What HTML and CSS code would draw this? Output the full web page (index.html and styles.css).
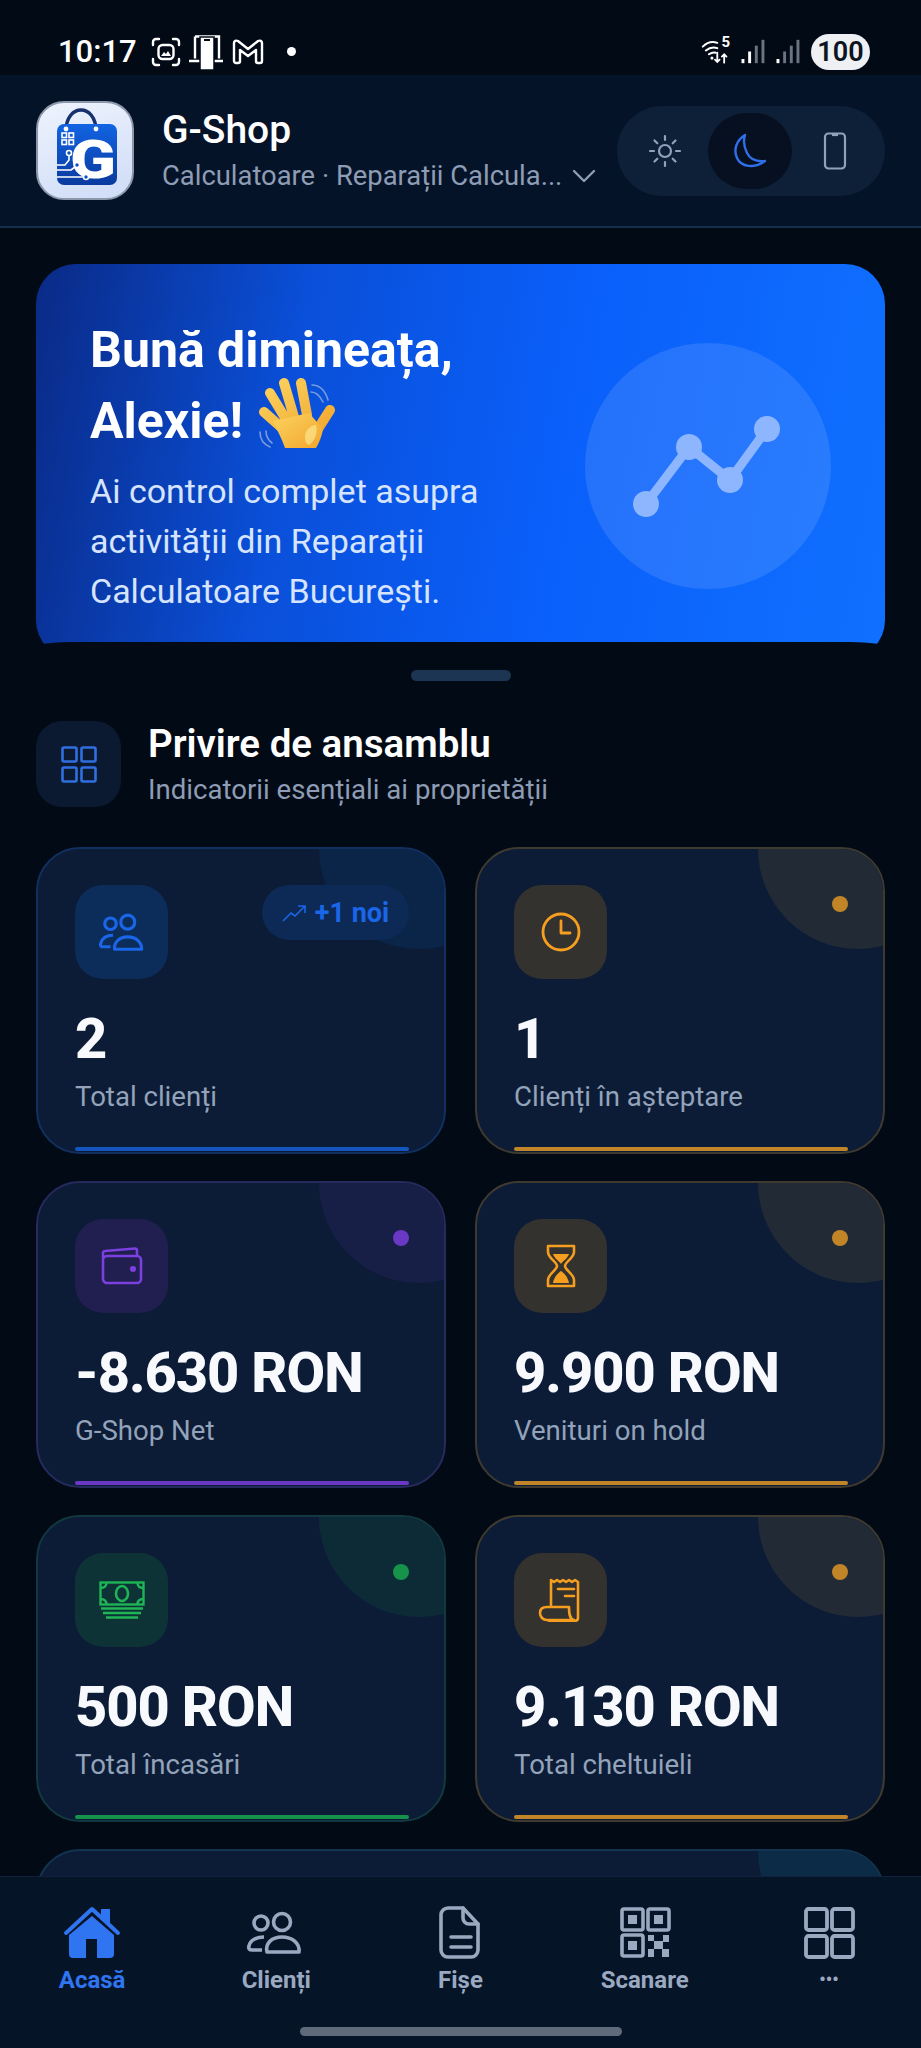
FILE: index.html
```html
<!DOCTYPE html>
<html lang="ro">

<head>
    <meta charset="UTF-8">
    <meta name="viewport" content="width=device-width, initial-scale=1.0">
    <title>G-Shop</title>
    <link rel="stylesheet" href="styles.css">
</head>

<body>
    <div class="page">

        <div class="status">
            <div class="status-left">
                <span class="time">10:17</span>
                <svg class="st-icon" width="32" height="32" viewBox="0 0 32 32" fill="none" stroke="#fff" stroke-width="2.4" stroke-linecap="round">
                    <path d="M3 9V6a3 3 0 0 1 3-3h3M23 3h3a3 3 0 0 1 3 3v3M29 23v3a3 3 0 0 1-3 3h-3M9 29H6a3 3 0 0 1-3-3v-3" />
                    <rect x="8.5" y="9" width="15" height="14" rx="4" />
                    <path d="M11 20l3-4 2 2 2-3 3 5z" fill="#fff" stroke="none" />
                </svg>
                <svg class="st-icon" width="36" height="36" viewBox="0 0 36 36" fill="none">
                    <path d="M6 2.5h24v22" stroke="#fff" stroke-width="2.4" />
                    <path d="M6 2.5v22" stroke="#fff" stroke-width="2.4" />
                    <path d="M0 27h34" stroke="#fff" stroke-width="2.4" />
                    <rect x="11" y="3" width="14" height="33" fill="#fff" stroke="#020a16" stroke-width="1.5" />
                    <rect x="15" y="5" width="6" height="2" fill="#020a16" />
                </svg>
                <svg class="st-icon" width="32" height="28" viewBox="0 0 32 28" fill="none" stroke="#fff" stroke-width="2.4" stroke-linejoin="round">
                    <path d="M2 5c0-2 2-3 4-2l10 8 10-8c2-1 4 0 4 2v18a2 2 0 0 1-2 2h-2a2 2 0 0 1-2-2V12l-8 6-8-6v11a2 2 0 0 1-2 2H4a2 2 0 0 1-2-2z" />
                </svg>
                <span class="st-dot"></span>
            </div>
            <div class="status-right">
                <div class="wifi">
                    <svg width="34" height="26" viewBox="0 0 36 34" fill="none" stroke="#fff" stroke-width="2.6" stroke-linecap="round">
                        <path d="M2 10C8 4 15 3 21 5M6 15c5-4 10-5 15-3M10 20c3-2 6-3 9-2" />
                        <circle cx="14" cy="25" r="2" fill="#fff" stroke="none" />
                        <path d="M21 18v12m-3-3 3 3 3-3M30 31V20m-3 3 3-3 3 3" stroke-width="2.4" />
                    </svg>
                    <span class="wifi-num">5</span>
                </div>
                <svg width="26" height="25" viewBox="0 0 30 30">
                    <rect x="0" y="24" width="3.5" height="5" fill="#fff" />
                    <rect x="8" y="15" width="3.5" height="14" fill="#fff" />
                    <rect x="16" y="8" width="3.5" height="21" fill="#6b7480" />
                    <rect x="24" y="1" width="3.5" height="28" fill="#6b7480" />
                </svg>
                <svg width="26" height="25" viewBox="0 0 30 30">
                    <rect x="0" y="24" width="3.5" height="5" fill="#fff" />
                    <rect x="8" y="15" width="3.5" height="14" fill="#6b7480" />
                    <rect x="16" y="8" width="3.5" height="21" fill="#6b7480" />
                    <rect x="24" y="1" width="3.5" height="28" fill="#6b7480" />
                </svg>
                <span class="battery">100</span>
            </div>
        </div>

        <div class="header">
            <div class="logo">
                <svg width="94" height="95" viewBox="0 0 94 95" fill="none">
                    <defs>
                        <linearGradient id="bagGrad" x1="0" y1="0" x2="0" y2="1">
                            <stop offset="0" stop-color="#1264e4" />
                            <stop offset="1" stop-color="#0a3a9e" />
                        </linearGradient>
                    </defs>
                    <path d="M28 28C28 0 58 0 58 28" stroke="#17316f" stroke-width="3.5" />
                    <rect x="19" y="21" width="60" height="61" rx="7" fill="url(#bagGrad)" />
                    <circle cx="28" cy="26" r="2.4" fill="#fff" />
                    <circle cx="58" cy="26" r="2.4" fill="#fff" />
                    <text x="32" y="75" class="logo-g" textLength="46" lengthAdjust="spacingAndGlyphs">G</text>
                    <g stroke="#fff" stroke-width="1.6">
                        <rect x="24" y="30" width="4.5" height="4.5" />
                        <rect x="31" y="30" width="4.5" height="4.5" />
                        <rect x="24" y="37" width="4.5" height="4.5" />
                        <rect x="31" y="37" width="4.5" height="4.5" />
                        <path d="M19 62h8l4-5v-4M19 67h14l4-3M19 74h27" />
                        <circle cx="31" cy="50" r="2.5" fill="#0f4fc4" />
                        <circle cx="39" cy="62" r="2.5" fill="#0f4fc4" />
                        <circle cx="48" cy="74" r="2.5" fill="#0f4fc4" />
                    </g>
                </svg>
            </div>
            <div class="brand">
                <div class="brand-name">G-Shop</div>
                <div class="brand-sub">
                    <span>Calculatoare · Reparații Calcula...</span>
                    <svg width="24" height="14" viewBox="0 0 24 14" fill="none" stroke="#8e9db4" stroke-width="2.4" stroke-linecap="round" stroke-linejoin="round">
                        <path d="M2 2l10 10L22 2" />
                    </svg>
                </div>
            </div>
            <div class="theme">
                <div class="theme-btn">
                    <svg width="34" height="34" viewBox="0 0 34 34" fill="none" stroke="#8fa2bb" stroke-width="2.2" stroke-linecap="round">
                        <circle cx="17" cy="17" r="6" />
                        <path d="M17 2v4M17 28v4M2 17h4M28 17h4M6.5 6.5l2.8 2.8M24.7 24.7l2.8 2.8M6.5 27.5l2.8-2.8M24.7 9.3l2.8-2.8" />
                    </svg>
                </div>
                <div class="theme-btn theme-on">
                    <svg width="36" height="36" viewBox="0 0 36 36" fill="none" stroke="#2f6fe8" stroke-width="2.4" stroke-linejoin="round">
                        <path d="M13 2C5 7 1 16 5 25c4 9 17 11 28 3-9 1-15-2-18-8C12 14 11 8 13 2z" />
                    </svg>
                </div>
                <div class="theme-btn">
                    <svg width="24" height="38" viewBox="0 0 24 38" fill="none" stroke="#8fa2bb" stroke-width="2.2">
                        <rect x="2" y="1.5" width="20" height="35" rx="3.5" />
                        <path d="M9 3h6" />
                    </svg>
                </div>
            </div>
        </div>

        <div class="main">

            <div class="hero">
                <div class="hero-text">
                    <h1 class="hero-title">Bună dimineața,<br>Alexie!
                        <svg class="wave" width="84" height="80" viewBox="14 8 84 80">
                            <defs>
                                <linearGradient id="handGrad" x1="0" y1="0" x2="1" y2="1">
                                    <stop offset="0" stop-color="#fbd35f" />
                                    <stop offset="1" stop-color="#f2a62e" />
                                </linearGradient>
                            </defs>
                            <g fill="none" stroke="#a9bde0" stroke-width="1.6" stroke-linecap="round" opacity="0.7">
                                <path d="M71 16c7 0 13 5 16 15M70 23c5 0 9 4 12 10" />
                                <path d="M19 63c0 6 3 12 10 15M25 62c0 5 2 9 6 12" />
                            </g>
                            <g stroke="url(#handGrad)" stroke-width="10" stroke-linecap="round">
                                <path d="M23 43l18 16M29 24l17 28M43 14l10 34M60 14l6 32M89 41l-14 22" />
                            </g>
                            <path d="M32 52l36-8 14 16c-1 7-4 14-7 19H44c-3-9-8-18-12-27z" fill="url(#handGrad)" />
                            <path d="M64 68c0-6 5-12 11-12 2 8-1 16-7 20-3-1-4-4-4-8z" fill="#fde58f" opacity="0.7" />
                        </svg>
                    </h1>
                    <p class="hero-sub">Ai control complet asupra activității din Reparații Calculatoare București.</p>
                </div>
                <div class="hero-art">
                    <svg width="160" height="120" viewBox="0 0 160 120" fill="none">
                        <path d="M18 98L61 41l41 33 37-51" stroke="#8eb6ff" stroke-width="9" stroke-linejoin="round" />
                        <circle cx="18" cy="98" r="13" fill="#8eb6ff" />
                        <circle cx="61" cy="41" r="13" fill="#8eb6ff" />
                        <circle cx="102" cy="74" r="13" fill="#8eb6ff" />
                        <circle cx="139" cy="23" r="13" fill="#8eb6ff" />
                    </svg>
                </div>
            </div>
            <div class="hero-foot"></div>

            <div class="handle"></div>

            <div class="section-head">
                <div class="section-icon">
                    <svg width="36" height="37" viewBox="0 0 36 37" fill="none" stroke="#2f6fe0" stroke-width="2.6">
                        <rect x="1.5" y="1.5" width="14" height="14" rx="1.5" />
                        <rect x="20.5" y="1.5" width="14" height="14" rx="1.5" />
                        <rect x="1.5" y="21.5" width="14" height="14" rx="1.5" />
                        <rect x="20.5" y="21.5" width="14" height="14" rx="1.5" />
                    </svg>
                </div>
                <div>
                    <div class="section-title">Privire de ansamblu</div>
                    <div class="section-sub">Indicatorii esențiali ai proprietății</div>
                </div>
            </div>

            <div class="grid">

                <div class="card blue">
                    <div class="card-top">
                        <div class="card-icon">
                            <svg width="46" height="38" viewBox="0 0 56 46" fill="none" stroke="currentColor" stroke-width="3.8" stroke-linejoin="round">
                                <circle cx="14" cy="13" r="7" />
                                <circle cx="35" cy="11" r="8.5" />
                                <path d="M19 44c-1-9 6-15 16-15s17 6 17 15z" />
                                <path d="M17 27c-7 0-13 3-15 10-1 3 1 4 3 4h9" />
                            </svg>
                        </div>
                        <div class="pill">
                            <svg width="24" height="18" viewBox="0 0 24 18" fill="none" stroke="currentColor" stroke-width="1.6">
                                <path d="M1 17l8-8 4 3 10-10M16 2h7v7" />
                            </svg>
                            <span>+1 noi</span>
                        </div>
                    </div>
                    <div class="card-value">2</div>
                    <div class="card-label">Total clienți</div>
                    <div class="card-bar"></div>
                </div>

                <div class="card amber">
                    <div class="card-top">
                        <div class="card-icon">
                            <svg width="40" height="40" viewBox="0 0 40 40" fill="none" stroke="currentColor" stroke-width="2.8" stroke-linecap="round" stroke-linejoin="round">
                                <circle cx="20" cy="20" r="18" />
                                <path d="M20 9v12h9" />
                            </svg>
                        </div>
                        <span class="card-dot"></span>
                    </div>
                    <div class="card-value">1</div>
                    <div class="card-label">Clienți în așteptare</div>
                    <div class="card-bar"></div>
                </div>

                <div class="card purple">
                    <div class="card-top">
                        <div class="card-icon">
                            <svg width="42" height="38" viewBox="0 0 42 38" fill="none" stroke="currentColor" stroke-width="2.6" stroke-linejoin="round">
                                <path d="M2 11V6c0-1 1-2 2-2L34 1.5c1-.1 2 .5 2 2V9" />
                                <rect x="2" y="9" width="38" height="27" rx="4" />
                                <circle cx="32" cy="22" r="1.8" fill="currentColor" />
                            </svg>
                        </div>
                        <span class="card-dot"></span>
                    </div>
                    <div class="card-value">-8.630 RON</div>
                    <div class="card-label">G-Shop Net</div>
                    <div class="card-bar"></div>
                </div>

                <div class="card amber">
                    <div class="card-top">
                        <div class="card-icon">
                            <svg width="32" height="44" viewBox="0 0 32 44" fill="none" stroke="currentColor" stroke-width="2.6" stroke-linejoin="round">
                                <path d="M3 2h26v6c0 6-9 10-9 14s9 8 9 14v6H3v-6c0-6 9-10 9-14S3 14 3 8z" />
                                <path d="M8 10h16c-1 4-6 7-8 10-2-3-7-6-8-10zM16 27c3 2 7 6 8 12H8c1-6 5-10 8-12z" fill="currentColor" stroke="none" />
                            </svg>
                        </div>
                        <span class="card-dot"></span>
                    </div>
                    <div class="card-value">9.900 RON</div>
                    <div class="card-label">Venituri on hold</div>
                    <div class="card-bar"></div>
                </div>

                <div class="card green">
                    <div class="card-top">
                        <div class="card-icon">
                            <svg width="46" height="38" viewBox="0 0 46 38" fill="none" stroke="currentColor" stroke-width="2.4">
                                <rect x="1.5" y="1.5" width="43" height="22" />
                                <ellipse cx="23" cy="12.5" rx="6" ry="7.5" stroke-width="2.6" />
                                <path d="M1.5 7c4 0 6-2 6-5.500M44.500 7c-4 0-6-2-6-5.500M1.500 18c4 0 6 2 6 5.500M44.500 18c-4 0-6 2-6 5.500" />
                                <path d="M2 27.500h42M4 32h38M7 36.500h32" stroke-width="2.6" />
                            </svg>
                        </div>
                        <span class="card-dot"></span>
                    </div>
                    <div class="card-value">500 RON</div>
                    <div class="card-label">Total încasări</div>
                    <div class="card-bar"></div>
                </div>

                <div class="card amber">
                    <div class="card-top">
                        <div class="card-icon">
                            <svg width="46" height="44" viewBox="0 0 46 44" fill="none" stroke="currentColor" stroke-width="2.6" stroke-linejoin="round" stroke-linecap="round">
                                <path d="M13 28V2l3 2 3-2 3 2 3-2 3 2 3-2 3 2 3-2 3 2v36c0 2-2 3-4 3H11" />
                                <path d="M9 29h22c0 5 0 12 5 13H9c-4 0-7-3-7-7s3-6 7-6z" />
                                <path d="M20 11h16M27 18h9" />
                            </svg>
                        </div>
                        <span class="card-dot"></span>
                    </div>
                    <div class="card-value">9.130 RON</div>
                    <div class="card-label">Total cheltuieli</div>
                    <div class="card-bar"></div>
                </div>

                <div class="card teal card-wide"></div>

            </div>
        </div>

        <div class="nav">
            <div class="nav-item active">
                <svg width="60" height="60" viewBox="0 0 60 60" fill="currentColor">
                    <path d="M4 30L30 6l26 24" fill="none" stroke="currentColor" stroke-width="4" stroke-linecap="round" stroke-linejoin="round" />
                    <path d="M39 6h9v15l-9-8z" />
                    <path d="M30 13l22 19v19a4 4 0 0 1-4 4H35V36H24v19H11a4 4 0 0 1-4-4V32z" />
                </svg>
                <span>Acasă</span>
            </div>
            <div class="nav-item">
                <svg width="60" height="60" viewBox="0 0 60 60" fill="none" stroke="currentColor" stroke-width="3.6" stroke-linejoin="round">
                    <circle cx="15" cy="20" r="7" />
                    <circle cx="36" cy="19" r="8.5" />
                    <path d="M21 49c-2-9 5-15 15-15s18 6 17 15z" />
                    <path d="M18 34c-7 0-14 3-15 9-1 3 1 4 3 4h10" />
                </svg>
                <span>Clienți</span>
            </div>
            <div class="nav-item">
                <svg width="60" height="60" viewBox="0 0 60 60" fill="none" stroke="currentColor" stroke-width="3.6" stroke-linecap="round" stroke-linejoin="round">
                    <path d="M18 5h15l15 16v26a7 7 0 0 1-7 7H18a7 7 0 0 1-7-7V12a7 7 0 0 1 7-7z" />
                    <path d="M33 5v10a6 6 0 0 0 6 6h9M21 34h20M21 44h20" />
                </svg>
                <span>Fișe</span>
            </div>
            <div class="nav-item">
                <svg width="60" height="60" viewBox="0 0 60 60" fill="currentColor">
                    <g fill="none" stroke="currentColor" stroke-width="3.6">
                        <rect x="7" y="6" width="21" height="21" rx="2" />
                        <rect x="33" y="6" width="21" height="21" rx="2" />
                        <rect x="7" y="32" width="21" height="21" rx="2" />
                    </g>
                    <rect x="13" y="12" width="9" height="9" />
                    <rect x="39" y="12" width="9" height="9" />
                    <rect x="13" y="38" width="9" height="9" />
                    <rect x="33" y="32" width="6" height="6" />
                    <rect x="48" y="32" width="6" height="7" />
                    <rect x="39" y="38" width="9" height="8" />
                    <rect x="33" y="46" width="6" height="8" />
                    <rect x="47" y="46" width="7" height="8" />
                </svg>
                <span>Scanare</span>
            </div>
            <div class="nav-item">
                <svg width="60" height="60" viewBox="0 0 60 60" fill="none" stroke="currentColor" stroke-width="3.8">
                    <rect x="7" y="6" width="21" height="21" rx="2.5" />
                    <rect x="33" y="6" width="21" height="21" rx="2.5" />
                    <rect x="7" y="33" width="21" height="21" rx="2.5" />
                    <rect x="33" y="33" width="21" height="21" rx="2.5" />
                </svg>
                <span class="nav-more">•••</span>
            </div>
            <div class="home-bar"></div>
        </div>

    </div>
</body>

</html>
```

FILE: styles.css
```css
* {
    box-sizing: border-box;
}

body {
    margin: 0;
    padding: 0;
    background-color: #020a16;
    font-family: Roboto, "Noto Sans", sans-serif;
    color: white;
}

.page {
    width: 921px;
    height: 2048px;
    display: flex;
    flex-direction: column;
    overflow: hidden;
}

/* status bar */
.status {
    height: 75px;
    flex-shrink: 0;
    display: flex;
    justify-content: space-between;
    align-items: center;
    padding: 28px 51px 0 58px;
}

.status-left {
    display: flex;
    align-items: center;
    gap: 7px;
}

.time {
    font-size: 31px;
    font-weight: 500;
    margin-right: 6px;
}

.st-dot {
    width: 9px;
    height: 9px;
    margin-left: 16px;
    border-radius: 50%;
    background-color: white;
}

.status-right {
    display: flex;
    align-items: center;
    gap: 9px;
}

.wifi {
    position: relative;
    display: flex;
}

.wifi-num {
    position: absolute;
    top: -6px;
    right: 2px;
    font-size: 15px;
    font-weight: 700;
}

.battery {
    width: 59px;
    height: 36px;
    border-radius: 18px;
    background-color: #eef0f3;
    color: #0b1420;
    font-size: 27px;
    font-weight: 600;
    line-height: 36px;
    text-align: center;
}

/* header */
.header {
    height: 153px;
    flex-shrink: 0;
    display: flex;
    align-items: center;
    padding: 0 36px;
    background-color: #051329;
    border-bottom: 2px solid #14304e;
}

.logo {
    width: 98px;
    height: 99px;
    flex-shrink: 0;
    display: flex;
    align-items: center;
    justify-content: center;
    border: 2px solid #8c97ab;
    border-radius: 28px;
    background: linear-gradient(160deg, #eef3fd, #cfdcf7);
}

.logo-g {
    font-family: Roboto, sans-serif;
    font-size: 54px;
    font-weight: 900;
    fill: #fff;
}

.brand {
    flex: 1;
    margin-left: 28px;
}

.brand-name {
    font-size: 39px;
    font-weight: 500;
    line-height: 44px;
}

.brand-sub {
    display: flex;
    align-items: center;
    gap: 10px;
    margin-top: 7px;
    color: #8e9db4;
    font-size: 27.4px;
    line-height: 34px;
}

.theme {
    width: 268px;
    height: 90px;
    flex-shrink: 0;
    display: flex;
    align-items: center;
    justify-content: space-between;
    padding: 0 8px 0 6px;
    border-radius: 45px;
    background-color: #0d2038;
}

.theme-btn {
    width: 84px;
    height: 76px;
    display: flex;
    align-items: center;
    justify-content: center;
}

.theme-on {
    border-radius: 38px;
    background-color: #061021;
}

/* main */
.main {
    flex: 1;
    min-height: 0;
    overflow: hidden;
    padding: 36px 36px 0;
}

.hero {
    height: 396px;
    display: flex;
    justify-content: space-between;
    padding: 51px 54px 0;
    border-radius: 40px;
    background: linear-gradient(100deg, #0a2a86 0%, #0a4fd8 30%, #0a5ffa 60%, #1070ff 100%);
}

/* sheet that covers the foot of the hero */
.hero-foot {
    position: relative;
    height: 18px;
    margin-top: -18px;
    background-color: #020a16;
    border-radius: 34px 34px 0 0 / 5px 5px 0 0;
}

.hero-text {
    width: 420px;
}

.hero-title {
    margin: 0;
    font-size: 50px;
    font-weight: 700;
    line-height: 71px;
    white-space: nowrap;
}

.wave {
    margin: -30px 0 -10px;
    vertical-align: -9px;
}

.hero-sub {
    margin: 9px 0 0;
    color: #d6e4ff;
    font-size: 34px;
    line-height: 50px;
}

.hero-art {
    width: 246px;
    height: 246px;
    margin-top: 28px;
    display: flex;
    align-items: center;
    justify-content: center;
    border-radius: 50%;
    background-color: rgba(255, 255, 255, 0.11);
}

.handle {
    width: 100px;
    height: 11px;
    margin: 10px auto 0;
    border-radius: 6px;
    background-color: #1c3553;
}

.section-head {
    display: flex;
    align-items: center;
    gap: 27px;
    margin-top: 40px;
}

.section-icon {
    width: 85px;
    height: 86px;
    display: flex;
    align-items: center;
    justify-content: center;
    border-radius: 26px;
    background-color: #0b1a30;
}

.section-title {
    font-size: 38.5px;
    font-weight: 600;
    line-height: 44px;
}

.section-sub {
    margin-top: 7px;
    color: #8e9db4;
    font-size: 27.6px;
    line-height: 34px;
}

/* stat cards */
.grid {
    display: grid;
    grid-template-columns: 410px 410px;
    grid-auto-rows: 307px;
    column-gap: 29px;
    row-gap: 27px;
    margin-top: 40px;
}

.card {
    position: relative;
    display: flex;
    flex-direction: column;
    padding: 36px 35px 1px 37px;
    border: 2px solid var(--edge);
    border-radius: 44px;
    background-color: #0c1c36;
    overflow: hidden;
}

.card::before {
    content: "";
    position: absolute;
    top: -100px;
    right: -75px;
    width: 200px;
    height: 200px;
    border-radius: 50%;
    background-color: var(--blob);
}

.card-wide {
    grid-column: span 2;
}

.blue {
    --tone: #1a66e8;
    --edge: #12305f;
    --blob: #0b2549;
    --box: #0c2c5a;
    --bar: #1654be;
}

.amber {
    --tone: #f59e1f;
    --edge: #3f3a30;
    --blob: #212a35;
    --box: #33322e;
    --bar: #c18528;
}

.purple {
    --tone: #7c3fe0;
    --edge: #262a5c;
    --blob: #171f47;
    --box: #201f4f;
    --bar: #6a38c4;
}

.green {
    --tone: #1fb455;
    --edge: #12393f;
    --blob: #0d2b37;
    --box: #0d3336;
    --bar: #16924a;
}

.teal {
    --edge: #133450;
    --blob: #0c2b47;
}

.card-top {
    position: relative;
    display: flex;
    justify-content: space-between;
    align-items: flex-start;
}

.card-icon {
    width: 93px;
    height: 94px;
    display: flex;
    align-items: center;
    justify-content: center;
    border-radius: 28px;
    background-color: var(--box);
    color: var(--tone);
}

.card-dot {
    width: 16px;
    height: 16px;
    margin-top: 11px;
    border-radius: 50%;
    background-color: var(--bar);
}

.pill {
    height: 55px;
    width: 147px;
    display: flex;
    align-items: center;
    justify-content: center;
    gap: 9px;
    border-radius: 28px;
    background-color: #0c2a55;
    color: var(--tone);
    font-size: 27px;
    font-weight: 700;
}

.card-value {
    position: relative;
    margin-top: 28px;
    font-size: 56px;
    font-weight: 800;
    line-height: 64px;
    letter-spacing: -1px;
    color: #f7f9fd;
}

.card-label {
    position: relative;
    margin-top: 9px;
    color: #93a3ba;
    font-size: 27.6px;
    line-height: 34px;
}

.card-bar {
    position: relative;
    height: 4px;
    margin-top: auto;
    border-radius: 2px;
    background-color: var(--bar);
}

/* bottom nav */
.nav {
    position: relative;
    height: 172px;
    flex-shrink: 0;
    display: grid;
    grid-template-columns: repeat(5, 1fr);
    padding-top: 26px;
    background-color: #061428;
    border-top: 1px solid #10223b;
}

.nav-item {
    display: flex;
    flex-direction: column;
    align-items: center;
    color: #9aa9c0;
    font-size: 24px;
    font-weight: 700;
    line-height: 28px;
}

.nav-item span {
    margin-top: 3px;
}

.active {
    color: #2f74f0;
}

.nav-item .nav-more {
    font-size: 18px;
}

.home-bar {
    position: absolute;
    left: 300px;
    bottom: 12px;
    width: 322px;
    height: 9px;
    border-radius: 5px;
    background-color: #5f6b7a;
}
```
